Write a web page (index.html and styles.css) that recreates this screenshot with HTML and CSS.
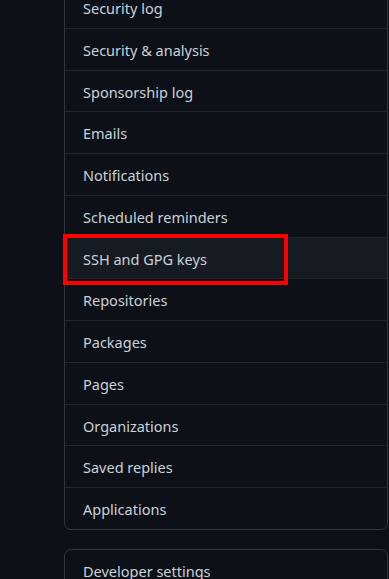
FILE: index.html
```html
<!DOCTYPE html>
<html lang="en">
<head>
    <meta charset="UTF-8">
    <meta name="viewport" content="width=device-width, initial-scale=1.0">
    <title>Settings menu</title>
    <link rel="stylesheet" href="styles.css">
</head>
<body>
    <div class="settings-nav">
        <nav class="menu">
            <a class="menu-item" href="#">Security log</a>
            <a class="menu-item" href="#">Security &amp; analysis</a>
            <a class="menu-item" href="#">Sponsorship log</a>
            <a class="menu-item" href="#">Emails</a>
            <a class="menu-item" href="#">Notifications</a>
            <a class="menu-item" href="#">Scheduled reminders</a>
            <a class="menu-item selected" href="#">SSH and GPG keys<span class="highlight"></span></a>
            <a class="menu-item" href="#">Repositories</a>
            <a class="menu-item" href="#">Packages</a>
            <a class="menu-item" href="#">Pages</a>
            <a class="menu-item" href="#">Organizations</a>
            <a class="menu-item" href="#">Saved replies</a>
            <a class="menu-item" href="#">Applications</a>
        </nav>

        <nav class="menu">
            <a class="menu-item" href="#">Developer settings</a>
        </nav>
    </div>
</body>
</html>
```

FILE: styles.css
```css
body {
    font-family: "Noto Sans", "Open Sans", sans-serif;
    margin: 0;
    padding: 0;
    background-color: #0d1117;
    color: #c9d1d9;
    overflow: hidden;
}
.settings-nav {
    margin: -14px 1px 0 64px;
    display: flex;
    flex-direction: column;
    gap: 19px;
}
.menu {
    display: flex;
    flex-direction: column;
    border: 1px solid #30363d;
    border-radius: 7px;
}
.menu-item {
    position: relative;
    display: block;
    box-sizing: border-box;
    height: 41.75px;
    line-height: 38.75px;
    padding: 2px 18px 0;
    font-size: 14.5px;
    color: #c9d1d9;
    text-decoration: none;
    border-bottom: 1px solid #21262d;
}
.menu-item:last-child {
    height: 40.75px;
    border-bottom: none;
}
.menu-item.selected {
    background-color: #161b22;
}
.highlight {
    position: absolute;
    left: -2px;
    top: -4px;
    width: 225px;
    height: 51px;
    box-sizing: border-box;
    border: 4px solid #ff0000;
}
```
